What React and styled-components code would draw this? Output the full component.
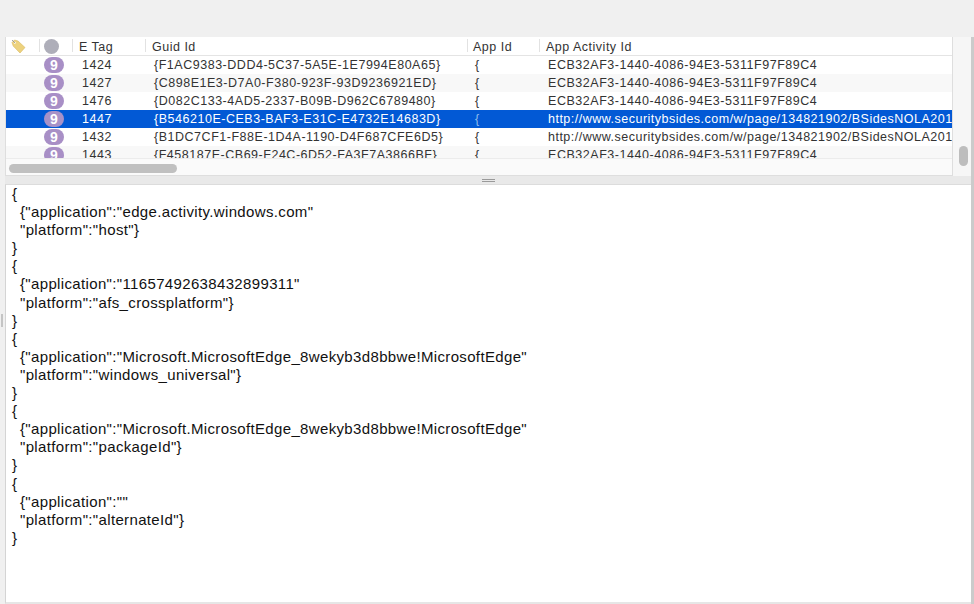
import React from "react";
import styled, { createGlobalStyle } from "styled-components";

const rows = [
  { tag: "1424", guid: "{F1AC9383-DDD4-5C37-5A5E-1E7994E80A65}", activity: "ECB32AF3-1440-4086-94E3-5311F97F89C4" },
  { tag: "1427", guid: "{C898E1E3-D7A0-F380-923F-93D9236921ED}", activity: "ECB32AF3-1440-4086-94E3-5311F97F89C4" },
  { tag: "1476", guid: "{D082C133-4AD5-2337-B09B-D962C6789480}", activity: "ECB32AF3-1440-4086-94E3-5311F97F89C4" },
  { tag: "1447", guid: "{B546210E-CEB3-BAF3-E31C-E4732E14683D}", activity: "http://www.securitybsides.com/w/page/134821902/BSidesNOLA201", selected: true },
  { tag: "1432", guid: "{B1DC7CF1-F88E-1D4A-1190-D4F687CFE6D5}", activity: "http://www.securitybsides.com/w/page/134821902/BSidesNOLA201" },
  { tag: "1443", guid: "{F458187E-CB69-F24C-6D52-FA3F7A3866BF}", activity: "ECB32AF3-1440-4086-94E3-5311F97F89C4" },
];

const entries = [
  { application: "edge.activity.windows.com", platform: "host" },
  { application: "11657492638432899311", platform: "afs_crossplatform" },
  { application: "Microsoft.MicrosoftEdge_8wekyb3d8bbwe!MicrosoftEdge", platform: "windows_universal" },
  { application: "Microsoft.MicrosoftEdge_8wekyb3d8bbwe!MicrosoftEdge", platform: "packageId" },
  { application: "", platform: "alternateId" },
];

const GlobalStyle = createGlobalStyle`
  html, body {
    margin: 0;
    height: 100%;
    background: #f0f0f0;
  }
  body {
    font-family: "Liberation Sans", Arial, sans-serif;
    overflow: hidden;
  }
`;

const Window = styled.div`
  position: relative;
  width: 974px;
  height: 604px;
  padding: 37px 0 0 5px;
  box-sizing: border-box;
  display: flex;
  background: #f0f0f0;
`;

const Content = styled.div`
  flex: 1;
  display: flex;
  flex-direction: column;
  min-width: 0;
  border-right: 3px solid #cbcbcb;
`;

const TopArea = styled.div`
  display: flex;
  height: 139px;
  flex: none;
`;

const TablePanel = styled.div`
  width: 948px;
  flex: none;
  display: flex;
  flex-direction: column;
  border: 1px solid #dedede;
  border-top: 0;
  box-sizing: border-box;
  background: #fff;
`;

const columns = "33px 33px 73px 322px 72px 1fr";

const HeaderRow = styled.div`
  display: grid;
  grid-template-columns: ${columns};
  height: 19px;
  flex: none;
  box-sizing: border-box;
  border-bottom: 1px solid #e4e4e4;
  font-size: 12.5px;
  color: #333;
`;

const HeaderCell = styled.div`
  display: flex;
  align-items: center;
  padding-left: ${(p) => (p.$icon ? 5 : p.$pad ?? 7)}px;
  padding-top: ${(p) => (p.$icon ? 0 : 2)}px;
  letter-spacing: 0.5px;
  position: relative;
  &::before {
    content: "";
    display: ${(p) => (p.$first ? "none" : "block")};
    position: absolute;
    left: 0;
    top: 2px;
    bottom: 3px;
    width: 1px;
    background: #e2e2e2;
  }
`;

const HeaderDot = styled.span`
  width: 15px;
  height: 15px;
  border-radius: 50%;
  background: #aeaeb9;
`;

const RowList = styled.div`
  height: 102px;
  flex: none;
  overflow: hidden;
`;

const Row = styled.div`
  display: grid;
  grid-template-columns: ${columns};
  height: 18px;
  align-items: center;
  font-size: 12.5px;
  background: ${(p) => (p.$selected ? "#0259d5" : p.$even ? "#f8f8f8" : "#fff")};
  color: ${(p) => (p.$selected ? "#fff" : "#333")};
`;

const Cell = styled.div`
  padding-left: ${(p) => p.$pad ?? 9}px;
  white-space: nowrap;
  overflow: hidden;
  letter-spacing: 0.52px;
  min-width: 0;
`;

const UrlCell = styled(Cell)`
  letter-spacing: ${(p) => (p.$url ? 0.49 : 0.54)}px;
`;

const BraceCell = styled(Cell)`
  color: ${(p) => (p.$selected ? "#8fbcec" : "#333")};
`;

const Badge = styled.span`
  display: flex;
  align-items: center;
  justify-content: center;
  width: 20px;
  height: 16px;
  border-radius: 8px;
  background: ${(p) => (p.$selected ? "#a892c8" : "#a88fc6")};
  color: #fff;
  font-size: 14px;
  font-weight: 700;
  letter-spacing: 0;
`;

const ScrollTrack = styled.div`
  flex: 1;
  padding: 5px 2px 0 3px;
  background: #fafafa;
  border-top: 1px solid #ececec;
`;

const ScrollThumb = styled.div`
  width: 168px;
  height: 9px;
  border-radius: 5px;
  background: #c0c0c0;
`;

const SideScroll = styled.div`
  flex: 1;
  display: flex;
  justify-content: center;
  padding: 109px 1px 0 3px;
  background: #f6f6f6;
`;

const SideThumb = styled.div`
  width: 9px;
  height: 20px;
  border-radius: 5px;
  background: #bdbdbd;
`;

const Splitter = styled.div`
  height: 8px;
  flex: none;
  display: flex;
  flex-direction: column;
  align-items: center;
  justify-content: center;
  gap: 1px;
  background: #e9e9e9;
`;

const GripLine = styled.span`
  width: 13px;
  height: 1px;
  background: #9a9a9a;
`;

const TextPanel = styled.div`
  flex: 1;
  padding-left: 6px;
  background: #fff;
  border-left: 1px solid #d4d4d4;
  border-top: 1px solid #dcdcdc;
  border-bottom: 2px solid #e6e6e6;
  font-size: 15px;
  letter-spacing: 0.35px;
  line-height: 18.1px;
  color: #111;
`;

const Line = styled.div`
  padding-left: ${(p) => (p.$inner ? 8 : 0)}px;
  height: 18.1px;
  white-space: pre;
`;

const ResizeHandle = styled.span`
  position: absolute;
  left: 1px;
  top: 314px;
  width: 2px;
  height: 13px;
  background: #c4c4c4;
`;

const TagIcon = () => (
  <svg width="15" height="15" viewBox="0 0 15 15">
    <path d="M1 3.5 L3.5 1 L7 2 L14 8.5 L9 14 L2.2 7 Z" fill="#edd27e" stroke="#d8b95f" strokeWidth="0.6" />
    <circle cx="3.8" cy="3.8" r="1" fill="#fff" />
    <path d="M1 1 L4 4" stroke="#8d8d8d" strokeWidth="0.8" />
  </svg>
);

export default function App() {
  return (
    <>
      <GlobalStyle />
      <Window>
        <ResizeHandle />
        <Content>
          <TopArea>
            <TablePanel>
              <HeaderRow>
                <HeaderCell $first $icon>
                  <TagIcon />
                </HeaderCell>
                <HeaderCell $icon>
                  <HeaderDot />
                </HeaderCell>
                <HeaderCell>E Tag</HeaderCell>
                <HeaderCell>Guid Id</HeaderCell>
                <HeaderCell $pad={6}>App Id</HeaderCell>
                <HeaderCell>App Activity Id</HeaderCell>
              </HeaderRow>
              <RowList>
                {rows.map((row, i) => (
                  <Row key={row.tag} $selected={row.selected} $even={i % 2 === 1}>
                    <Cell />
                    <Cell $pad={5}>
                      <Badge $selected={row.selected}>9</Badge>
                    </Cell>
                    <Cell $pad={10}>{row.tag}</Cell>
                    <Cell>{row.guid}</Cell>
                    <BraceCell $pad={8} $selected={row.selected}>{"{"}</BraceCell>
                    <UrlCell $url={row.activity.startsWith("http")}>{row.activity}</UrlCell>
                  </Row>
                ))}
              </RowList>
              <ScrollTrack>
                <ScrollThumb />
              </ScrollTrack>
            </TablePanel>
            <SideScroll>
              <SideThumb />
            </SideScroll>
          </TopArea>
          <Splitter>
            <GripLine />
            <GripLine />
          </Splitter>
          <TextPanel>
            {entries.map((entry, i) => (
              <React.Fragment key={i}>
                <Line>{"{"}</Line>
                <Line $inner>{`{"application":"${entry.application}"`}</Line>
                <Line $inner>{`"platform":"${entry.platform}"}`}</Line>
                <Line>{"}"}</Line>
              </React.Fragment>
            ))}
          </TextPanel>
        </Content>
      </Window>
    </>
  );
}
